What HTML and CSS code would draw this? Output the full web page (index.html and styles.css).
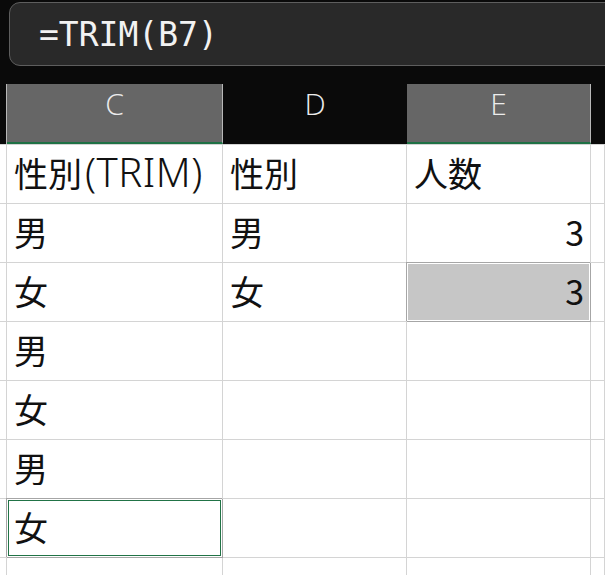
FILE: index.html
```html
<!DOCTYPE html>
<html lang="ja">
<head>
  <meta charset="UTF-8">
  <meta name="viewport" content="width=device-width, initial-scale=1.0">
  <title>TRIM</title>
  <link rel="stylesheet" href="styles.css">
</head>
<body>
  <div class="formula-bar">
    <span class="formula">=TRIM(B7)</span>
  </div>

  <div class="sheet">
    <div class="row head">
      <div class="corner"></div>
      <div class="col-head selected">C</div>
      <div class="col-head">D</div>
      <div class="col-head selected">E</div>
      <div class="col-head filler"></div>
    </div>
    <div class="row">
      <div class="corner"></div>
      <div class="cell">性別<span class="latin">(TRIM)</span></div>
      <div class="cell">性別</div>
      <div class="cell">人数</div>
      <div class="cell"></div>
    </div>
    <div class="row">
      <div class="corner"></div>
      <div class="cell">男</div>
      <div class="cell">男</div>
      <div class="cell num">3</div>
      <div class="cell"></div>
    </div>
    <div class="row">
      <div class="corner"></div>
      <div class="cell">女</div>
      <div class="cell">女</div>
      <div class="cell num range">3</div>
      <div class="cell"></div>
    </div>
    <div class="row">
      <div class="corner"></div>
      <div class="cell">男</div>
      <div class="cell"></div>
      <div class="cell"></div>
      <div class="cell"></div>
    </div>
    <div class="row">
      <div class="corner"></div>
      <div class="cell">女</div>
      <div class="cell"></div>
      <div class="cell"></div>
      <div class="cell"></div>
    </div>
    <div class="row">
      <div class="corner"></div>
      <div class="cell">男</div>
      <div class="cell"></div>
      <div class="cell"></div>
      <div class="cell"></div>
    </div>
    <div class="row">
      <div class="corner"></div>
      <div class="cell active">女</div>
      <div class="cell"></div>
      <div class="cell"></div>
      <div class="cell"></div>
    </div>
    <div class="row last">
      <div class="corner"></div>
      <div class="cell"></div>
      <div class="cell"></div>
      <div class="cell"></div>
      <div class="cell"></div>
    </div>
  </div>
</body>
</html>
```

FILE: styles.css
```css
html,
body {
  height: 100%;
}

body {
  margin: 0;
  background-color: #0a0a0a;
  overflow: hidden;
  font-family: "Noto Sans CJK JP", "Noto Sans", sans-serif;
}

.formula-bar {
  height: 62px;
  margin: 2px -30px 0 9px;
  padding-left: 29px;
  background-color: #292929;
  border: 1px solid #5e5e5e;
  border-radius: 11px;
  display: flex;
  align-items: center;
}

.formula {
  font-family: "DejaVu Sans Mono", "Liberation Mono", monospace;
  font-size: 33px;
  color: #f2f2f2;
}

.sheet {
  margin-top: 18px;
  background-color: #ffffff;
}

.row {
  display: grid;
  grid-template-columns: 7px 216px 184px 184px 1fr;
  height: 59px;
}

.row.last {
  height: 18px;
}

.row.head {
  height: 60px;
  background-color: #0a0a0a;
  border-bottom: 1px solid #d4d4d4;
}

.corner {
  border-right: 1px solid #d4d4d4;
  border-bottom: 1px solid #d4d4d4;
}

.head .corner {
  border-right-color: #b8b8b8;
  border-bottom: none;
}

.col-head {
  font-family: "Open Sans", "Noto Sans", sans-serif;
  font-weight: 300;
  font-size: 30px;
  line-height: 40px;
  color: #ececec;
  text-align: center;
}

.col-head.selected {
  background-color: #666666;
  border-right: 1px solid #b8b8b8;
  border-bottom: 2px solid #1e7145;
}

.cell {
  font-size: 34px;
  line-height: 56px;
  color: #111111;
  padding: 0 6px 0 7px;
  white-space: nowrap;
  overflow: hidden;
  border-right: 1px solid #d4d4d4;
  border-bottom: 1px solid #d4d4d4;
}

.latin {
  font-family: "Noto Sans", sans-serif;
  font-weight: 300;
  font-size: 40px;
  line-height: 1;
  letter-spacing: 0.5px;
  margin-left: 3px;
}

.cell.num {
  text-align: right;
}

.cell.range {
  background-color: #c6c6c6;
  border-color: #a6a6a6;
  box-shadow: -1px -1px 0 #a6a6a6, inset 0 0 0 1px #ffffff;
}

.cell.active {
  overflow: visible;
  border-color: #a6a6a6;
  box-shadow: -1px -1px 0 #a6a6a6, inset 0 0 0 1px #ffffff, inset 0 0 0 2px #217346;
}
```
